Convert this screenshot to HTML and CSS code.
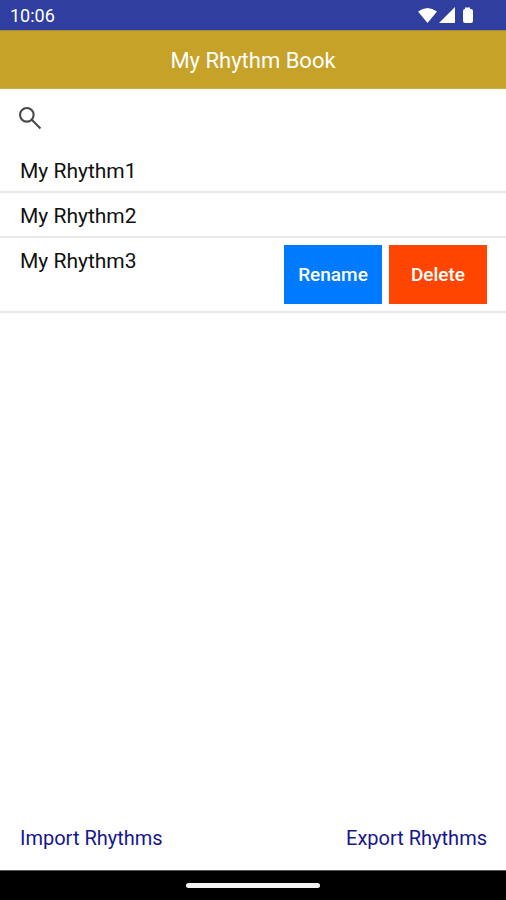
FILE: index.html
```html
<!DOCTYPE html>
<html lang="en">
<head>
<meta charset="utf-8">
<meta name="viewport" content="width=device-width, initial-scale=1">
<title>My Rhythm Book</title>
<link rel="stylesheet" href="styles.css">
</head>
<body>
<div class="status">
  <span>10:06</span>
  <svg class="status-icons" viewBox="0 0 56 18" aria-hidden="true">
    <path d="M0 4.500Q9.500-2.500 19 4.500L9.500 16z"/>
    <path d="M37 0V16H21z"/>
    <path d="M47 1.500V.5h5v1.500h1q2 0 2 2V14q0 2-2 2h-6q-2 0-2-2V4q0-2 2-2z"/>
  </svg>
</div>
<header class="header"><h1 class="title">My Rhythm Book</h1></header>
<main class="content">
  <div class="toolbar">
    <button class="search" type="button" aria-label="Search">
      <svg class="search-icon" viewBox="0 0 22 22" aria-hidden="true"><circle cx="7.500" cy="7.500" r="6.500"/><path d="M12.500 12.500l8 8"/></svg>
    </button>
  </div>
  <ul class="list">
    <li class="row"><span>My Rhythm1</span></li>
    <li class="row"><span>My Rhythm2</span></li>
    <li class="row">
      <span>My Rhythm3</span>
      <div class="actions">
        <button class="action rename" type="button">Rename</button>
        <button class="action delete" type="button">Delete</button>
      </div>
    </li>
  </ul>
</main>
<footer class="footer">
  <a class="link" href="#import">Import Rhythms</a>
  <a class="link" href="#export">Export Rhythms</a>
</footer>
<div class="navbar"><div class="handle"></div></div>
</body>
</html>
```
FILE: styles.css
```css
* {
  box-sizing: border-box;
}

body {
  margin: 0;
  min-height: 100vh;
  display: flex;
  flex-direction: column;
  background: #fff;
  color: #111;
  font-family: Roboto, "Liberation Sans", sans-serif;
  font-size: 21px;
  line-height: 32px;
}

.status {
  display: flex;
  align-items: center;
  justify-content: space-between;
  height: 30px;
  padding: 2px 32px 0 10px;
  background: #303f9f;
  color: #fff;
  font-size: 18px;
  line-height: 28px;
}

.status-icons {
  width: 56px;
  height: 18px;
  fill: #fff;
}

.header {
  padding: 16px 16px 13px;
  border-top: 1px solid #a08d3d;
  border-bottom: 1px solid #cfae45;
  background: #c6a229;
  color: #fff;
  text-align: center;
}

.title {
  margin: 0;
  font-size: 22px;
  font-weight: 400;
  line-height: 28px;
}

.content {
  flex: 1;
}

.toolbar {
  display: flex;
  padding: 18px 19px;
}

.search {
  display: flex;
  padding: 0;
  border: 0;
  background: none;
}

.search-icon {
  width: 23px;
  height: 23px;
  fill: none;
  stroke: #484848;
  stroke-width: 2;
}

.list {
  margin: 0;
  padding: 0;
  list-style: none;
}

.row {
  display: flex;
  justify-content: space-between;
  padding: 7px 19px 4px 20px;
  border-bottom: 2px solid #e8e8e8;
}

.actions {
  display: flex;
  gap: 7px;
  margin-bottom: 3px;
}

.action {
  width: 98px;
  height: 59px;
  padding: 0;
  border: 0;
  color: #fff;
  font: 500 19px/28px Roboto, "Liberation Sans", sans-serif;
}

.rename {
  background: #007aff;
}

.delete {
  background: #ff4500;
}

.footer {
  display: flex;
  justify-content: space-between;
  padding: 18px 19px 16px 20px;
}

.link {
  color: #16168f;
  font-size: 20px;
  text-decoration: none;
}

.navbar {
  display: flex;
  align-items: center;
  justify-content: center;
  height: 30px;
  border-top: 1px solid #555;
  background: #000;
}

.handle {
  width: 134px;
  height: 5px;
  border-radius: 3px;
  background: #f2f2f2;
}
```
